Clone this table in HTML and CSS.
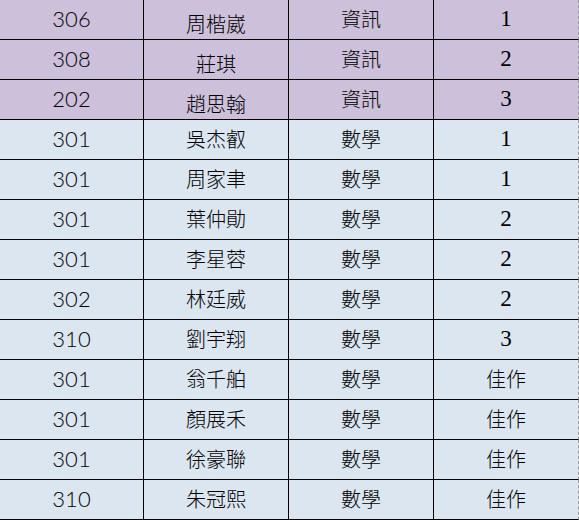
FILE: index.html
```html
<!DOCTYPE html>
<html lang="zh-Hant">
<head>
<meta charset="utf-8">
<title>名單</title>
<link rel="stylesheet" href="styles.css">
</head>
<body>
<div class="sheet">
  <div class="row purple"><div class="cell num">306</div><div class="cell name low">周楷崴</div><div class="cell subj">資訊</div><div class="cell rank">1</div></div>
  <div class="row purple"><div class="cell num">308</div><div class="cell name low">莊琪</div><div class="cell subj">資訊</div><div class="cell rank">2</div></div>
  <div class="row purple"><div class="cell num">202</div><div class="cell name low">趙思翰</div><div class="cell subj">資訊</div><div class="cell rank">3</div></div>
  <div class="row blue"><div class="cell num">301</div><div class="cell name">吳杰叡</div><div class="cell subj">數學</div><div class="cell rank">1</div></div>
  <div class="row blue"><div class="cell num">301</div><div class="cell name">周家聿</div><div class="cell subj">數學</div><div class="cell rank">1</div></div>
  <div class="row blue"><div class="cell num">301</div><div class="cell name">葉仲勛</div><div class="cell subj">數學</div><div class="cell rank">2</div></div>
  <div class="row blue"><div class="cell num">301</div><div class="cell name">李星蓉</div><div class="cell subj">數學</div><div class="cell rank">2</div></div>
  <div class="row blue"><div class="cell num">302</div><div class="cell name">林廷威</div><div class="cell subj">數學</div><div class="cell rank">2</div></div>
  <div class="row blue"><div class="cell num">310</div><div class="cell name">劉宇翔</div><div class="cell subj">數學</div><div class="cell rank">3</div></div>
  <div class="row blue"><div class="cell num">301</div><div class="cell name">翁千舶</div><div class="cell subj">數學</div><div class="cell rank cjk">佳作</div></div>
  <div class="row blue"><div class="cell num">301</div><div class="cell name">顏展禾</div><div class="cell subj">數學</div><div class="cell rank cjk">佳作</div></div>
  <div class="row blue"><div class="cell num">301</div><div class="cell name">徐豪聯</div><div class="cell subj">數學</div><div class="cell rank cjk">佳作</div></div>
  <div class="row blue"><div class="cell num">310</div><div class="cell name">朱冠熙</div><div class="cell subj">數學</div><div class="cell rank cjk">佳作</div></div>
</div>
</body>
</html>
```
FILE: styles.css
```css
html, body {
  margin: 0;
  padding: 0;
  background: #ffffff;
}

.sheet {
  width: 579px;
  height: 520px;
  overflow: hidden;
  color: #000000;
}

.row {
  display: grid;
  grid-template-columns: 144px 145px 145px 145px;
  height: 40px;
}

.purple { background: #ccc0da; }
.blue { background: #dce6f1; }

.cell {
  box-sizing: border-box;
  border-right: 1px solid #000000;
  border-bottom: 1px solid #000000;
  display: flex;
  align-items: center;
  justify-content: center;
  height: 40px;
  padding-bottom: 2px;
}

.cell.rank {
  border-right: 1px dashed #9a9a9a;
}

.num {
  font-family: "Lato", "Liberation Sans", sans-serif;
  font-weight: 300;
  font-size: 22px;
}

.name, .subj, .cjk {
  font-family: "Noto Sans CJK TC", "Noto Sans CJK SC", sans-serif;
  font-weight: 300;
  font-size: 20px;
}

.name.low {
  padding-top: 10px;
}

.rank {
  font-family: "Liberation Serif", serif;
  font-size: 23px;
}

.rank.cjk {
  font-family: "Noto Sans CJK TC", "Noto Sans CJK SC", sans-serif;
  font-weight: 300;
  font-size: 20px;
}
```
